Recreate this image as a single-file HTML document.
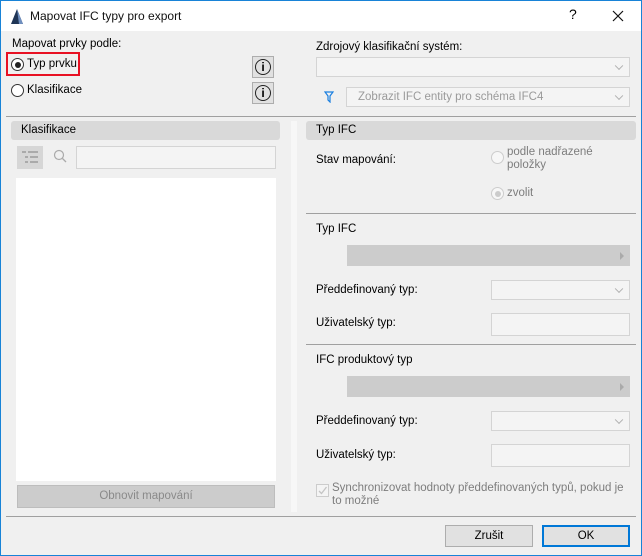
<!DOCTYPE html>
<html><head><meta charset="utf-8"><style>
*{box-sizing:border-box;margin:0;padding:0}
body{width:642px;height:556px;overflow:hidden;font-family:"Liberation Sans","DejaVu Sans",sans-serif;font-size:11.5px;color:#000;position:relative;background:#f0f0f0}
.a{position:absolute}
.t{position:absolute;white-space:nowrap;line-height:13px}
.g{color:#7d7d7d}
.sep{position:absolute;height:1px;background:#a0a0a0}
.dd{position:absolute;background:#f4f4f4;border:1px solid #d4d4d4}
.dd::after{content:"";position:absolute;right:7px;top:50%;width:5px;height:5px;border-right:1px solid #b0b0b0;border-bottom:1px solid #b0b0b0;transform:translateY(-70%) rotate(45deg)}
.bar{position:absolute;background:#cccccc}
.bar::after{content:"";position:absolute;right:6px;top:50%;margin-top:-4px;border-left:4px solid #aaa;border-top:4px solid transparent;border-bottom:4px solid transparent}
.inp{position:absolute;background:#f4f4f4;border:1px solid #d4d4d4}
.hdr{position:absolute;background:#d9d9d9;border-radius:3px;padding-left:10px;line-height:19px}
.rad{position:absolute;width:13px;height:13px;border-radius:50%;border:1px solid #333;background:#fff}
.info{position:absolute;width:22px;height:22px;background:#e1e1e1;border:1px solid #adadad}
.info::after{content:"";position:absolute;left:2px;top:2px;width:14px;height:14px;border:1.5px solid #222;border-radius:50%}
.info b{position:absolute;left:0;width:20px;top:3px;text-align:center;font-size:12px;font-weight:bold;line-height:14px}
</style></head><body>
<div class="a" style="left:0;top:0;width:642px;height:556px;border:1px solid #1883d7"></div>
<div class="a" style="left:1px;top:1px;width:640px;height:30px;background:#fff"></div>
<svg class="a" style="left:10px;top:8px" width="14" height="16" viewBox="0 0 14 16"><path d="M1 16 L7 1 L13 16 Z" fill="#1f3556"/><path d="M7 1 L13 16 L9 16 Z" fill="#6f8fbf"/></svg>
<div class="t" style="left:30px;top:10px;font-size:12px;color:#111">Mapovat IFC typy pro export</div>
<div class="t" style="left:569px;top:8px;font-size:14px">?</div>
<svg class="a" style="left:612px;top:10px" width="12" height="12"><path d="M1 1L11 11M11 1L1 11" stroke="#111" stroke-width="1.2"/></svg>

<div class="t" style="left:12px;top:38px">Mapovat prvky podle:</div>
<div class="a" style="left:6px;top:52px;width:74px;height:24px;border:2px solid #e81123"></div>
<div class="rad" style="left:11px;top:58px"><div class="a" style="left:2.5px;top:2.5px;width:6px;height:6px;border-radius:50%;background:#222"></div></div>
<div class="t" style="left:27px;top:58px">Typ prvku</div>
<div class="rad" style="left:11px;top:84px"></div>
<div class="t" style="left:27px;top:84px">Klasifikace</div>
<div class="info" style="left:252px;top:56px"><b>i</b></div>
<div class="info" style="left:252px;top:82px"><b>i</b></div>

<div class="t" style="left:316px;top:41px">Zdrojový klasifikační systém:</div>
<div class="dd" style="left:316px;top:57px;width:314px;height:20px"></div>
<svg class="a" style="left:324px;top:91px" width="10" height="12"><path d="M1 1H9L6 5V11L4 9V5Z" fill="none" stroke="#1a7fe0" stroke-width="1.2"/></svg>
<div class="dd" style="left:346px;top:87px;width:284px;height:20px"></div>
<div class="t g" style="left:358px;top:91px;color:#9a9a9a">Zobrazit IFC entity pro schéma IFC4</div>
<div class="sep" style="left:6px;top:116px;width:630px"></div>

<div class="hdr" style="left:11px;top:121px;width:269px">Klasifikace</div>
<div class="a" style="left:291px;top:121px;width:6px;height:391px;background:#f7f7f7"></div>
<div class="a" style="left:17px;top:146px;width:26px;height:23px;background:#d6d6d6"></div>
<svg class="a" style="left:22px;top:151px" width="16" height="13"><g fill="#aaa"><rect x="0" y="0" width="4" height="2"/><rect x="6" y="0" width="10" height="2"/><rect x="3" y="5" width="3" height="2"/><rect x="8" y="5" width="8" height="2"/><rect x="3" y="10" width="3" height="2"/><rect x="8" y="10" width="8" height="2"/></g></svg>
<svg class="a" style="left:53px;top:149px" width="14" height="14"><circle cx="6" cy="6" r="4.5" fill="none" stroke="#aaa" stroke-width="1.2"/><path d="M9.5 9.5L13 13" stroke="#aaa" stroke-width="1.3"/></svg>
<div class="inp" style="left:76px;top:146px;width:200px;height:23px"></div>
<div class="a" style="left:16px;top:178px;width:260px;height:303px;background:#fff"></div>
<div class="a" style="left:17px;top:485px;width:258px;height:23px;background:#cccccc;border:1px solid #bdbdbd;text-align:center;line-height:21px;color:#8a8a8a">Obnovit mapování</div>

<div class="hdr" style="left:306px;top:121px;width:330px">Typ IFC</div>
<div class="t" style="left:316px;top:154px">Stav mapování:</div>
<div class="rad" style="left:491px;top:151px;border-color:#ccc;background:#f7f7f7"></div>
<div class="t g" style="left:507px;top:146px">podle nadřazené</div>
<div class="t g" style="left:507px;top:159px">položky</div>
<div class="rad" style="left:491px;top:187px;border-color:#ccc;background:#f7f7f7"><div class="a" style="left:2.5px;top:2.5px;width:6px;height:6px;border-radius:50%;background:#ccc"></div></div>
<div class="t g" style="left:507px;top:187px">zvolit</div>
<div class="sep" style="left:306px;top:213px;width:330px"></div>
<div class="t" style="left:316px;top:223px">Typ IFC</div>
<div class="bar" style="left:347px;top:245px;width:283px;height:21px"></div>
<div class="t" style="left:316px;top:284px">Předdefinovaný typ:</div>
<div class="dd" style="left:491px;top:280px;width:139px;height:20px"></div>
<div class="t" style="left:316px;top:317px">Uživatelský typ:</div>
<div class="inp" style="left:491px;top:313px;width:139px;height:23px"></div>
<div class="sep" style="left:306px;top:344px;width:330px"></div>
<div class="t" style="left:316px;top:354px">IFC produktový typ</div>
<div class="bar" style="left:347px;top:376px;width:283px;height:21px"></div>
<div class="t" style="left:316px;top:415px">Předdefinovaný typ:</div>
<div class="dd" style="left:491px;top:411px;width:139px;height:20px"></div>
<div class="t" style="left:316px;top:449px">Uživatelský typ:</div>
<div class="inp" style="left:491px;top:444px;width:139px;height:23px"></div>
<div class="a" style="left:316px;top:484px;width:13px;height:13px;border:1px solid #ccc;background:#f4f4f4"></div>
<svg class="a" style="left:317px;top:485px" width="11" height="11"><path d="M2 6L4.5 8.5L9.5 2" fill="none" stroke="#c4c4c4" stroke-width="1.3"/></svg>
<div class="t g" style="left:332px;top:482px">Synchronizovat hodnoty předdefinovaných typů, pokud je</div>
<div class="t g" style="left:332px;top:495px">to možné</div>

<div class="sep" style="left:6px;top:516px;width:630px"></div>
<div class="a" style="left:445px;top:525px;width:88px;height:22px;background:#e1e1e1;border:1px solid #adadad;text-align:center;line-height:20px">Zrušit</div>
<div class="a" style="left:542px;top:525px;width:88px;height:22px;background:#e1e1e1;border:2px solid #0078d7;text-align:center;line-height:18px">OK</div>
</body></html>
